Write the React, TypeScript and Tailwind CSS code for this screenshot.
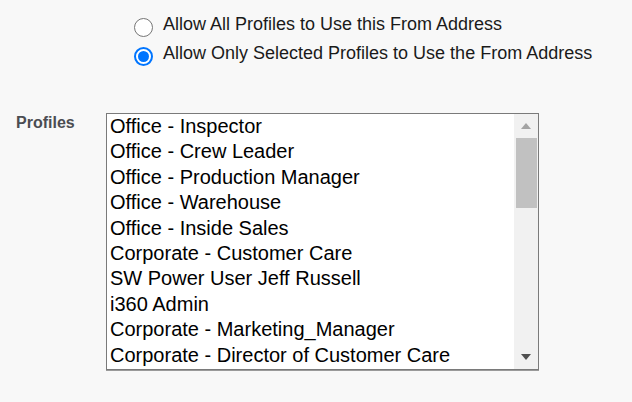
import React from 'react';

const profiles = [
  'Office - Inspector',
  'Office - Crew Leader',
  'Office - Production Manager',
  'Office - Warehouse',
  'Office - Inside Sales',
  'Corporate - Customer Care',
  'SW Power User Jeff Russell',
  'i360 Admin',
  'Corporate - Marketing_Manager',
  'Corporate - Director of Customer Care',
];

function Radio({ checked, label }: { checked?: boolean; label: string }) {
  return (
    <label className="flex items-start h-[29px] cursor-pointer">
      <span
        className={
          checked
            ? 'mt-[9px] flex h-[19px] w-[19px] items-center justify-center rounded-full border-2 border-[#0075ff] bg-white'
            : 'mt-[9px] h-[19px] w-[19px] rounded-full border border-[#767676] bg-white'
        }
      >
        {checked && <span className="h-[11px] w-[11px] rounded-full bg-[#0075ff]" />}
      </span>
      <span className="ml-[10px] mt-[1px] text-[18px] leading-[29px] text-[#1a1a1a]">{label}</span>
    </label>
  );
}

export default function App() {
  return (
    <div className="min-h-screen bg-[#f8f8f8] font-['Arial','Liberation_Sans',sans-serif]">
      {/* From address permissions */}
      <div className="pl-[134px] pt-[9px]">
        <Radio label="Allow All Profiles to Use this From Address" />
        <Radio checked label="Allow Only Selected Profiles to Use the From Address" />
      </div>

      <div className="mt-[46px] flex items-start">
        <div className="w-[106px] pl-[16px] mt-[1px] text-[16px] font-bold leading-[18px] text-[#4b4d52]">
          Profiles
        </div>

        {/* Listbox */}
        <div className="flex h-[257px] w-[433px] border border-[#7a7a7a] bg-white shadow-[0_1px_0_#9a9a9a]">
          <div className="flex-1 overflow-hidden pl-[3px]">
            {profiles.map((p) => (
              <div key={p} className="h-[25.4px] whitespace-nowrap text-[20px] leading-[25.4px] text-black">
                {p}
              </div>
            ))}
          </div>

          {/* Scrollbar */}
          <div className="flex w-[24px] flex-col items-center bg-[#f1f1f1]">
            <div className="flex h-[24px] w-full items-center justify-center">
              <svg width="10" height="6" viewBox="0 0 10 6">
                <path d="M0 6 L5 0 L10 6 Z" fill="#a3a3a3" />
              </svg>
            </div>
            <div className="ml-[2px] mr-[1px] h-[70px] w-[21px] self-start bg-[#c1c1c1]" />
            <div className="flex-1" />
            <div className="flex h-[24px] w-full items-center justify-center">
              <svg width="10" height="6" viewBox="0 0 10 6">
                <path d="M0 0 L10 0 L5 6 Z" fill="#505050" />
              </svg>
            </div>
          </div>
        </div>
      </div>
    </div>
  );
}
